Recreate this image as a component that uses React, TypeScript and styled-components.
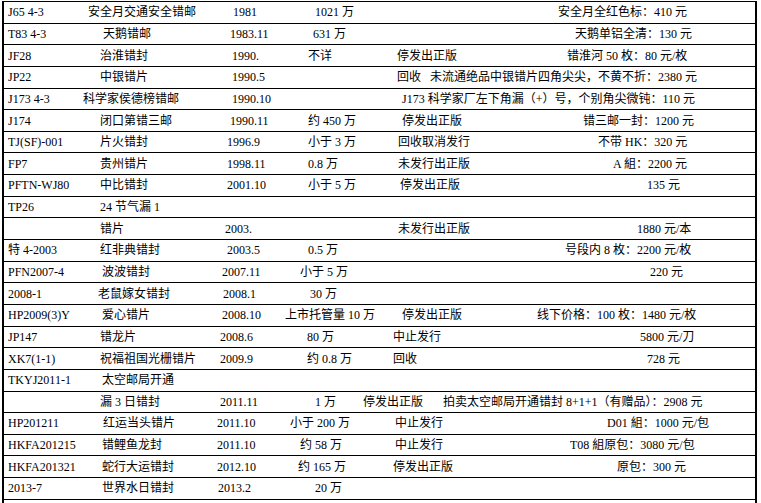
import styled, { createGlobalStyle } from 'styled-components';

const GlobalStyle = createGlobalStyle`
  html, body {
    margin: 0;
    padding: 0;
    background: #fff;
  }
  body {
    font-family: 'Liberation Serif', 'Noto Sans CJK SC', serif;
    font-size: 12px;
    color: #000;
  }
`;

// x where each column begins on the page
const COL_START = [4, 80, 215, 280, 355, 430];

type Cell = [string, number] | null;

const rows: Cell[][] = [
  [['J65 4-3', 8], ['安全月交通安全错邮', 88], ['1981', 233], ['1021 万', 315], null, ['安全月全红色标：410 元', 558]],
  [['T83 4-3', 8], ['天鹅错邮', 103], ['1983.11', 230], ['631 万', 313], null, ['天鹅单铝全清：130 元', 575]],
  [['JF28', 8], ['治淮错封', 100], ['1990.', 232], ['不详', 308], ['停发出正版', 397], ['错淮河 50 枚：80 元/枚', 567]],
  [['JP22', 8], ['中银错片', 100], ['1990.5', 232], null, ['回收', 397], ['未流通绝品中银错片四角尖尖，不黄不折：2380 元', 430]],
  [['J173 4-3', 8], ['科学家侯德榜错邮', 83], ['1990.10', 232], null, ['J173 科学家厂左下角漏（+）号，个别角尖微钝：110 元', 402], null],
  [['J174', 8], ['闭口第错三邮', 100], ['1990.11', 230], ['约 450 万', 308], ['停发出正版', 402], ['错三邮一封：1200 元', 583]],
  [['TJ(SF)-001', 8], ['片火错封', 100], ['1996.9', 227], ['小于 3 万', 308], ['回收取消发行', 398], ['不带 HK：320 元', 598]],
  [['FP7', 8], ['贵州错片', 100], ['1998.11', 227], ['0.8 万', 308], ['未发行出正版', 398], ['A 組：2200 元', 613]],
  [['PFTN-WJ80', 8], ['中比错封', 100], ['2001.10', 227], ['小于 5 万', 308], ['停发出正版', 400], ['135 元', 647]],
  [['TP26', 8], ['24 节气漏 1', 100], null, null, null, null],
  [null, ['错片', 100], ['2003.', 225], null, ['未发行出正版', 398], ['1880 元/本', 637]],
  [['特 4-2003', 8], ['红非典错封', 100], ['2003.5', 227], ['0.5 万', 308], null, ['号段内 8 枚：2200 元/枚', 565]],
  [['PFN2007-4', 8], ['波波错封', 102], ['2007.11', 222], ['小于 5 万', 300], null, ['220 元', 650]],
  [['2008-1', 8], ['老鼠嫁女错封', 98], ['2008.1', 223], ['30 万', 310], null, null],
  [['HP2009(3)Y', 8], ['爱心错片', 102], ['2008.10', 222], ['上市托管量 10 万', 285], ['停发出正版', 402], ['线下价格：100 枚：1480 元/枚', 537]],
  [['JP147', 8], ['错龙片', 100], ['2008.6', 220], ['80 万', 307], ['中止发行', 393], ['5800 元/刀', 640]],
  [['XK7(1-1)', 8], ['祝福祖国光栅错片', 100], ['2009.9', 220], ['约 0.8 万', 307], ['回收', 393], ['728 元', 647]],
  [['TKYJ2011-1', 8], ['太空邮局开通', 102], null, null, null, null],
  [null, ['漏 3 日错封', 100], ['2011.11', 220], ['1 万', 315], ['停发出正版', 363], ['拍卖太空邮局开通错封 8+1+1（有赠品）：2908 元', 443]],
  [['HP201211', 8], ['红运当头错片', 103], ['2011.10', 217], ['小于 200 万', 290], ['中止发行', 395], ['D01 組：1000 元/包', 607]],
  [['HKFA201215', 8], ['错鲤鱼龙封', 102], ['2011.10', 217], ['约 58 万', 300], ['中止发行', 395], ['T08 組原包：3080 元/包', 570]],
  [['HKFA201321', 8], ['蛇行大运错封', 102], ['2012.10', 217], ['约 165 万', 298], ['停发出正版', 393], ['原包：300 元', 617]],
  [['2013-7', 8], ['世界水日错封', 102], ['2013.2', 218], ['20 万', 315], null, null],
  [null, null, null, null, null, null],
];

const Page = styled.div`
  padding: 1px 0 0 2px;
`;

const Table = styled.div`
  box-sizing: border-box;
  width: 755px;
  min-height: calc(100vh - 1px);
  border-top: 1px solid #000;
  border-left: 2px solid #000;
  border-right: 2px solid #000;
`;

const Row = styled.div`
  box-sizing: border-box;
  height: 21.65px;
  border-bottom: 1px solid #000;
  display: grid;
  grid-template-columns: 76px 135px 65px 75px 75px 1fr;
  align-items: center;
`;

const Cell = styled.div<{ $indent: number }>`
  min-width: 0;
  padding-left: ${p => p.$indent}px;
  white-space: nowrap;
  line-height: 14px;
  overflow: visible;
`;

const App = () => (
  <Page>
    <GlobalStyle />
    <Table>
      {rows.map((row, i) => (
        <Row key={i}>
          {row.map((cell, j) => (
            <Cell key={j} $indent={cell ? cell[1] - COL_START[j] : 0}>
              {cell ? cell[0] : ''}
            </Cell>
          ))}
        </Row>
      ))}
    </Table>
  </Page>
);

export default App;
